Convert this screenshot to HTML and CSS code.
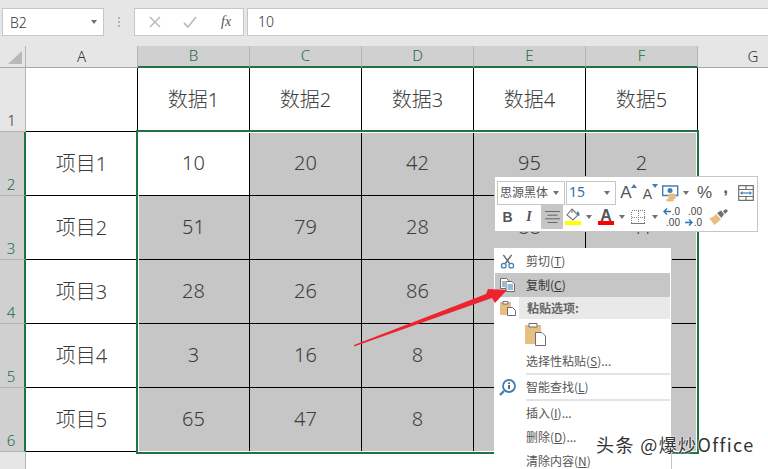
FILE: index.html
```html
<!DOCTYPE html>
<html>

<head>
  <meta http-equiv="Content-Type" content="text/html; charset=utf-8" />
  <title>Excel copy menu</title>
  <link rel="stylesheet" href="styles.css">
</head>

<body>
  <div id="formula-bar">
    <div id="name-box"><span>B2</span><i class="caret name-caret"></i></div>
    <div id="grip"><b></b><b></b><b></b></div>
    <div id="formula-btns">
      <svg width="12" height="12" viewBox="0 0 12 12"><path d="M1 1l10 10M11 1L1 11" stroke="#bdbdbd" stroke-width="1.6" fill="none" /></svg>
      <svg width="14" height="12" viewBox="0 0 14 12"><path d="M1 7l4 4 8-10" stroke="#bdbdbd" stroke-width="1.8" fill="none" /></svg>
      <span class="fx">fx</span>
    </div>
    <div id="formula-input">10</div>
  </div>

  <div id="sheet">
    <div class="corner"><svg width="14" height="13" viewBox="0 0 14 13"><path d="M0 13L14 0v13z" fill="#b8b8b8" /></svg></div>
    <div class="col">A</div>
    <div class="col on">B</div>
    <div class="col on">C</div>
    <div class="col on">D</div>
    <div class="col on">E</div>
    <div class="col on">F</div>
    <div class="col last">G</div>

    <div class="row">1</div>
    <div class="cell"></div>
    <div class="cell">数据1</div>
    <div class="cell">数据2</div>
    <div class="cell">数据3</div>
    <div class="cell">数据4</div>
    <div class="cell">数据5</div>
    <div class="blank"></div>

    <div class="row on">2</div>
    <div class="cell">项目1</div>
    <div class="cell">10</div>
    <div class="cell on">20</div>
    <div class="cell on">42</div>
    <div class="cell on">95</div>
    <div class="cell on">2</div>
    <div class="blank"></div>

    <div class="row on">3</div>
    <div class="cell">项目2</div>
    <div class="cell on">51</div>
    <div class="cell on">79</div>
    <div class="cell on">28</div>
    <div class="cell on">88</div>
    <div class="cell on">41</div>
    <div class="blank"></div>

    <div class="row on">4</div>
    <div class="cell">项目3</div>
    <div class="cell on">28</div>
    <div class="cell on">26</div>
    <div class="cell on">86</div>
    <div class="cell on"></div>
    <div class="cell on"></div>
    <div class="blank"></div>

    <div class="row on">5</div>
    <div class="cell">项目4</div>
    <div class="cell on">3</div>
    <div class="cell on">16</div>
    <div class="cell on">8</div>
    <div class="cell on"></div>
    <div class="cell on"></div>
    <div class="blank"></div>

    <div class="row on">6</div>
    <div class="cell">项目5</div>
    <div class="cell on">65</div>
    <div class="cell on">47</div>
    <div class="cell on">8</div>
    <div class="cell on"></div>
    <div class="cell on"></div>
    <div class="blank"></div>

    <div class="row"></div>
  </div>

  <!-- things lying over the sheet -->
  <div id="selection"></div>

  <div id="mini-toolbar">
    <div class="tool-row">
      <div class="combo font-combo"><span>思源黑体</span><i class="caret"></i></div>
      <div class="combo size-combo"><span>15</span><i class="caret"></i></div>
      <div class="btn w24"><span class="big-a">A</span><svg class="up" width="6" height="4" viewBox="0 0 6 4"><path d="M0 4l3-4 3 4z" fill="#3f7fb8" /></svg></div>
      <div class="btn w21"><span class="small-a">A</span><svg class="up" width="6" height="4" viewBox="0 0 6 4"><path d="M0 0l3 4 3-4z" fill="#3f7fb8" /></svg></div>
      <div class="btn w19">
        <svg width="17" height="17" viewBox="0 0 17 17">
          <path d="M.7 1h15v9.5H.7z" fill="#fff" stroke="#3f7fb8" stroke-width="1.4" />
          <circle cx="8" cy="5.5" r="2.5" fill="#3f7fb8" />
          <ellipse cx="10" cy="10" rx="4" ry="1.6" fill="#e8bd7c" />
          <ellipse cx="10" cy="12.5" rx="4" ry="1.6" fill="#e8bd7c" />
          <ellipse cx="8" cy="15" rx="4" ry="1.6" fill="#e8bd7c" />
        </svg>
      </div>
      <div class="btn w12"><i class="caret"></i></div>
      <div class="btn w25 percent">%</div>
      <div class="btn w17 comma">,</div>
      <div class="btn w23">
        <svg width="16" height="16" viewBox="0 0 16 16">
          <path d="M.7.7h14.6v14.6H.7zM.7 4.5h14.6M.7 11.5h14.6M8 .7v3.8M8 11.5v3.8" fill="none" stroke="#707070" stroke-width="1.2" />
          <path d="M3 8h10" stroke="#3f7fb8" stroke-width="1.2" />
          <path d="M2 8l2.4-2v4zM14 8l-2.4-2v4z" fill="#3f7fb8" />
        </svg>
      </div>
    </div>
    <div class="tool-row second">
      <div class="btn w21 bold">B</div>
      <div class="btn w22 ital">I</div>
      <div class="btn w22 pressed">
        <svg width="15" height="12" viewBox="0 0 15 12"><path d="M0 .5h15M2.5 4.2h10M0 7.8h15M2.5 11.5h10" stroke="#666" stroke-width="1" /></svg>
      </div>
      <div class="btn w20 swatch-btn">
        <svg width="16" height="14" viewBox="0 0 16 14">
          <path d="M7 1l6 6-5 5-6-5z" fill="#fff" stroke="#777" stroke-width="1.1" />
          <path d="M7 1V5" stroke="#777" stroke-width="1" />
          <path d="M12.5 3c1.5 1 2.5 3 2 5-1.200-.4-2.200-1.400-2.800-2.600z" fill="#3f7fb8" />
        </svg>
        <i class="swatch yellow"></i>
      </div>
      <div class="btn w12"><i class="caret"></i></div>
      <div class="btn w22 swatch-btn"><span class="color-a">A</span><i class="swatch red"></i></div>
      <div class="btn w10"><i class="caret"></i></div>
      <div class="btn w22">
        <svg width="14" height="14" viewBox="0 0 14 14" shape-rendering="crispEdges"><path d="M.5.5h13v13H.5zM7 .5v13M.5 7h13" fill="none" stroke="#888" stroke-width="1" stroke-dasharray="1 1" /><path d="M0 13.500h14" stroke="#777" stroke-width="1" /></svg>
      </div>
      <div class="btn w12"><i class="caret"></i></div>
      <div class="btn w22 decimals">
        <span><svg width="8" height="7" viewBox="0 0 8 7"><path d="M8 3.500H2M4 .5L1 3.500l3 3" fill="none" stroke="#2f74b5" stroke-width="1.400" /></svg>.0</span>
        <span>.00</span>
      </div>
      <div class="btn w22 decimals">
        <span>.00</span>
        <span><svg width="8" height="7" viewBox="0 0 8 7"><path d="M0 3.500h6M4 .5l3 3-3 3" fill="none" stroke="#2f74b5" stroke-width="1.400" /></svg>.0</span>
      </div>
      <div class="btn w26">
        <svg width="19" height="16" viewBox="0 0 19 16">
          <path d="M0 9c3 0 5-2 7-4l5 5c-2 2-5 5-7 6-1-2-3-5-5-7z" fill="#e6bf85" />
          <path d="M8 4l4-2.500 3 3.500-2.500 4z" fill="#707070" />
          <path d="M14 2l3-2 2 2-3 3z" fill="#707070" />
        </svg>
      </div>
    </div>
  </div>

  <div id="context-menu">
    <div class="item">
      <svg class="icon" width="15" height="15" viewBox="0 0 18 18">
        <path d="M4 1l8 11M14 1L6 12" stroke="#6d6d6d" stroke-width="1.800" fill="none" />
        <circle cx="4.500" cy="14" r="2.800" fill="#fff" stroke="#3f7fb8" stroke-width="1.500" />
        <circle cx="13.500" cy="14" r="2.800" fill="#fff" stroke="#3f7fb8" stroke-width="1.500" />
      </svg>
      <span>剪切(<u>T</u>)</span>
    </div>
    <div class="item active">
      <svg class="icon" width="15" height="14" viewBox="0 0 15 14">
        <path d="M.5.500h6l2 2v8h-8z" fill="#fff" stroke="#6d6d6d" />
        <path d="M6 3.500h6l2.500 2.500v7.500H6z" fill="#fff" stroke="#6d6d6d" />
        <path d="M2 4h3M2 6h3M2 8h3M7.500 7h5.500M7.500 9h5.500M7.500 11h5.500" stroke="#2f74b5" />
      </svg>
      <span>复制(<u>C</u>)</span>
    </div>
    <div class="item head">
      <svg class="icon" width="16" height="16" viewBox="0 0 16 16">
        <path d="M0 2h11v13H0z" fill="#e8bf82" />
        <path d="M3 1.500h5V4H3z" fill="#fff" stroke="#6d6d6d" />
        <path d="M7.500 7.500h5l3 3v5h-8z" fill="#fff" stroke="#6d6d6d" />
      </svg>
      <div class="head-label"><span>粘贴选项:</span></div>
    </div>
    <div class="item paste-row">
      <svg width="21" height="24" viewBox="0 0 21 24">
        <path d="M0 3h16v19H0z" fill="#e8bf82" />
        <path d="M4 1.500h8V5H4z" fill="#fff" stroke="#6d6d6d" />
        <path d="M10.500 10.500h6.500l3.500 3.500v9.500h-10z" fill="#fff" stroke="#6d6d6d" />
      </svg>
    </div>
    <div class="item"><span class="no-icon">选择性粘贴(<u>S</u>)...</span></div>
    <div class="sep"></div>
    <div class="item">
      <svg class="icon search-icon" width="17" height="17" viewBox="0 0 17 17">
        <path d="M5 12l-4 4" stroke="#3f7fb8" stroke-width="2.400" />
        <circle cx="10" cy="7" r="6" fill="#fff" stroke="#3f7fb8" stroke-width="1.800" />
        <path d="M10 6v4M10 3.500v1.500" stroke="#555" stroke-width="1.800" />
      </svg>
      <span>智能查找(<u>L</u>)</span>
    </div>
    <div class="sep"></div>
    <div class="item"><span class="no-icon">插入(<u>I</u>)...</span></div>
    <div class="item"><span class="no-icon">删除(<u>D</u>)...</span></div>
    <div class="item"><span class="no-icon">清除内容(<u>N</u>)</span></div>
  </div>

  <svg id="arrow" width="160" height="64" viewBox="0 0 160 64">
    <path d="M0 57L132 6l2-5 19 1-12 13-3-5L0 58.500z" fill="#ee2330" />
  </svg>

  <div id="watermark">头条 @爆炒Office</div>
</body>

</html>
```

FILE: styles.css
```css
html,
body {
  margin: 0;
  height: 469px;
  overflow: hidden;
  background: #fff;
}

body {
  position: relative;
  font-family: "Noto Sans CJK SC", "Liberation Sans", sans-serif;
  color: #333;
}

u {
  text-decoration: underline;
}

/* formula bar */
#formula-bar {
  display: flex;
  box-sizing: border-box;
  height: 46px;
  padding: 8px 0 10px 2px;
  background: #e6e6e6;
}

#formula-bar>div {
  box-sizing: border-box;
  background: #fff;
  border: 1px solid #c6c6c6;
}

#formula-bar>#grip {
  display: flex;
  flex-direction: column;
  justify-content: center;
  gap: 2px;
  width: 30px;
  background: none;
  border: 0;
  align-items: center;
}

#grip b {
  width: 2px;
  height: 2px;
  background: #b4b4b4;
}

#name-box {
  display: flex;
  align-items: center;
  justify-content: space-between;
  width: 102px;
  padding: 0 6px 0 7px;
  font: 300 14px "Noto Sans", "Liberation Sans", sans-serif;
  color: #333;
}

.caret {
  display: block;
  width: 0;
  height: 0;
  border-left: 3.500px solid transparent;
  border-right: 3.500px solid transparent;
  border-top: 4px solid #707070;
}

#formula-btns {
  display: flex;
  align-items: center;
  width: 110px;
  padding-left: 14px;
  gap: 22px;
}

.fx {
  font: italic 14px "Liberation Serif", serif;
  color: #555;
  margin-left: 2px;
}

#formula-input {
  flex: 1;
  margin-left: 3px;
  padding-left: 10px;
  border-right: 0 !important;
  font: 300 14px/25px "Noto Sans", "Liberation Sans", sans-serif;
  color: #333;
}

/* sheet */
#sheet {
  display: grid;
  grid-template-columns: 26px repeat(6, 112px) 70px;
  grid-template-rows: 22px repeat(6, 64px) 18px;
  font-family: "Noto Sans", "Noto Sans CJK SC", sans-serif;
  font-weight: 300;
}

.corner {
  display: flex;
  align-items: flex-end;
  box-sizing: border-box;
  padding: 0 3px 3px 8px;
  background: #e6e6e6;
  border-right: 1px solid #b4b4b4;
  border-bottom: 1px solid #a8a8a8;
}

.col {
  box-sizing: border-box;
  display: flex;
  align-items: center;
  justify-content: center;
  padding-bottom: 2px;
  background: #e6e6e6;
  border-right: 1px solid #b4b4b4;
  border-bottom: 1px solid #a8a8a8;
  font-size: 15px;
  color: #333;
}

.col.on {
  background: #d0d0d0;
  border-bottom: 2px solid #217346;
  color: #1f6b45;
}

/* the G column runs on past the window, so its letter sits right of the visible middle */
.col.last {
  border-right: 0;
  padding-left: 40px;
}

.row {
  box-sizing: border-box;
  display: flex;
  align-items: flex-end;
  justify-content: center;
  padding-right: 2px;
  padding-bottom: 1px;
  background: #e6e6e6;
  border-right: 1px solid #b4b4b4;
  border-bottom: 1px solid #b4b4b4;
  font-size: 15px;
  line-height: 20px;
  color: #333;
}

.row.on {
  background: #d0d0d0;
  border-right: 2px solid #217346;
  color: #1f6b45;
}

.cell {
  box-sizing: border-box;
  display: flex;
  align-items: center;
  justify-content: center;
  padding-bottom: 2px;
  border-right: 1px solid #000;
  border-bottom: 1px solid #000;
  font-size: 20px;
  color: #3c3c3c;
}

.cell.on {
  background: #c6c6c6;
}

#selection {
  position: absolute;
  left: 136px;
  top: 130px;
  width: 559px;
  height: 320px;
  border: 2px solid #217346;
  box-shadow: inset 0 0 0 1px #fff;
}

/* mini toolbar */
#mini-toolbar {
  position: absolute;
  left: 494px;
  top: 176px;
  box-sizing: border-box;
  width: 264px;
  height: 56px;
  padding-top: 4px;
  background: #fff;
  border: 1px solid #c6c6c6;
}

.tool-row {
  display: flex;
  height: 24px;
}

.tool-row.second {
  padding-left: 2px;
}

.combo {
  box-sizing: border-box;
  display: flex;
  align-items: center;
  justify-content: space-between;
  height: 24px;
  padding: 0 5px 0 2px;
  border: 1px solid #c6c6c6;
  font-size: 12px;
  color: #555;
}

.combo span {
  margin-bottom: 4px;
}

.font-combo {
  width: 68px;
  margin-left: 2px;
  margin-right: 1px;
}

.size-combo {
  width: 50px;
  font: 14px "Noto Sans", "Liberation Sans", sans-serif;
  color: #3a6ea5;
}

.btn {
  position: relative;
  display: flex;
  align-items: center;
  justify-content: center;
  height: 24px;
  flex: none;
  color: #555;
  font-family: "Liberation Sans", sans-serif;
}

.w10 { width: 10px; }
.w12 { width: 12px; }
.w17 { width: 17px; }
.w19 { width: 19px; }
.w20 { width: 20px; }
.w21 { width: 21px; }
.w22 { width: 22px; }
.w23 { width: 23px; }
.w24 { width: 24px; }
.w25 { width: 25px; }
.w26 { width: 26px; }

.big-a {
  font-size: 17px;
  margin-right: 4px;
}

.small-a {
  font-size: 14px;
  margin-right: 6px;
  margin-top: 2px;
}

.up {
  position: absolute;
  right: 3px;
  top: 3px;
}

.percent {
  font-size: 17px;
}

.comma {
  font-size: 17px;
  font-weight: bold;
  padding-bottom: 11px;
  box-sizing: border-box;
}

.bold {
  font-size: 14px;
  font-weight: bold;
}

.ital {
  font: italic bold 14px "Liberation Serif", serif;
}

.pressed {
  margin-left: 1px;
  background: #c6c6c6;
}

.swatch-btn {
  flex-direction: column;
  justify-content: flex-start;
  padding-top: 3px;
  box-sizing: border-box;
}

.swatch {
  position: absolute;
  left: 2px;
  right: 2px;
  top: 16px;
  height: 4px;
}

.swatch.yellow {
  background: #ffff00;
}

.swatch.red {
  left: 3px;
  right: 3px;
  background: #ff0000;
}

.color-a {
  font-size: 16px;
  line-height: 15px;
  font-weight: bold;
}

.decimals {
  flex-direction: column;
  font-size: 10px;
  line-height: 11px;
  color: #444;
  align-items: flex-end;
  padding-right: 3px;
  box-sizing: border-box;
}

.decimals svg {
  margin-right: 1px;
}

/* context menu */
#context-menu {
  position: absolute;
  left: 494px;
  top: 248px;
  box-sizing: border-box;
  width: 177px;
  height: 221px;
  padding: 1px;
  overflow: hidden;
  background: #fff;
  box-shadow: 1px 0 0 #c6c6c6;
  font-size: 12px;
  color: #555;
}

.item {
  display: flex;
  align-items: center;
  height: 24px;
}

.item span {
  margin-bottom: 2px;
}

.item .icon {
  flex: none;
  margin-left: 5px;
  margin-right: 11px;
}

.item.active {
  background: #c6c6c6;
  color: #333;
}

.item.head {
  height: 22px;
  font-weight: bold;
}

.item.head .icon {
  margin-left: 5px;
  margin-right: 3px;
}

.head-label {
  display: flex;
  align-items: center;
  flex: 1;
  height: 22px;
  padding-left: 8px;
  background: #e9e9e9;
  color: #666;
}

.item .search-icon {
  margin-left: 4px;
  margin-right: 10px;
}

.paste-row {
  height: 30px;
  padding-left: 30px;
}

.no-icon {
  padding-left: 31px;
}

.sep {
  height: 2px;
  margin-left: 31px;
  background: #e3e3e3;
}

#arrow {
  position: absolute;
  left: 354px;
  top: 288px;
}

#watermark {
  position: absolute;
  left: 596px;
  top: 433px;
  font: 18px/22px "Noto Sans CJK SC", "Liberation Sans", sans-serif;
  color: #333;
  text-shadow: 0 0 2px #fff, 0 0 2px #fff;
  letter-spacing: 1.400px;
  white-space: nowrap;
}
```
